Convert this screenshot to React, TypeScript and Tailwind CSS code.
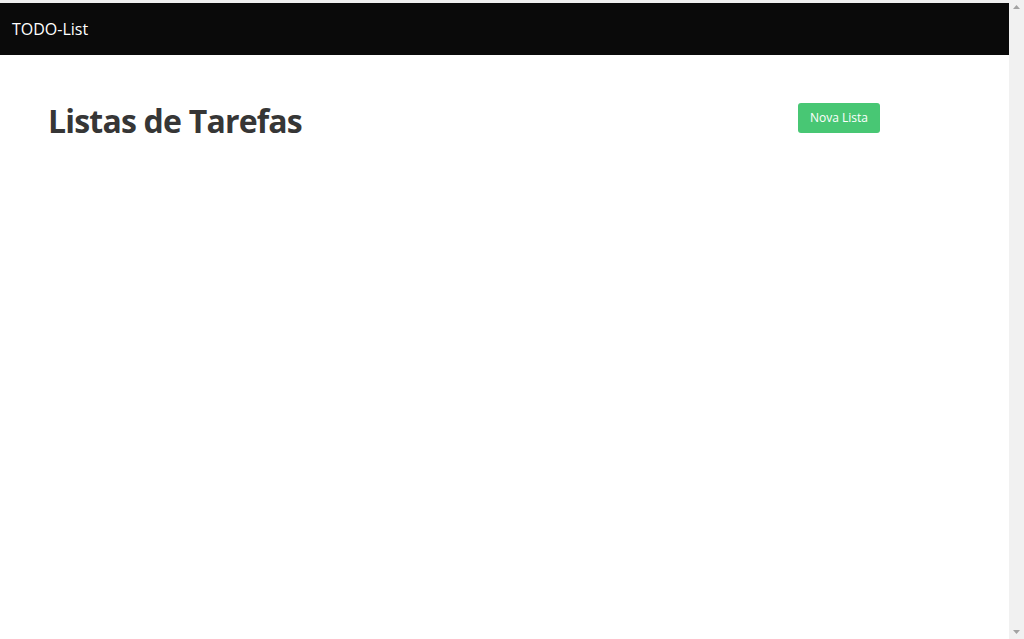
export default function App() {
  return (
    <div className="flex h-screen overflow-hidden bg-white font-['Open_Sans',sans-serif]">
      <div className="min-w-0 flex-1">
        <div className="h-[3px] bg-[#efefef]" />
        <nav className="flex h-[52px] items-center bg-[#0a0a0a] px-3 text-base text-white">
          <span>TODO-List</span>
        </nav>
        <main className="flex items-start justify-between pl-[48px] pr-[129px] pt-12">
          <h1 className="text-[32px] font-bold leading-[36px] tracking-[-0.8px] text-[#363636]">
            Listas de Tarefas
          </h1>
          <button className="h-[30px] rounded-[3px] bg-[#48c774] px-[12px] text-[12px] text-white">
            Nova Lista
          </button>
        </main>
      </div>
      {/* scrollbar track */}
      <div className="flex w-[15px] flex-col items-center justify-between bg-[#f1f1f1] py-[5px]">
        <svg width="7" height="4" viewBox="0 0 7 4" fill="#a3a3a3">
          <path d="M3.5 0 7 4H0z" />
        </svg>
        <svg width="7" height="4" viewBox="0 0 7 4" fill="#a3a3a3">
          <path d="M0 0h7L3.5 4z" />
        </svg>
      </div>
    </div>
  );
}
